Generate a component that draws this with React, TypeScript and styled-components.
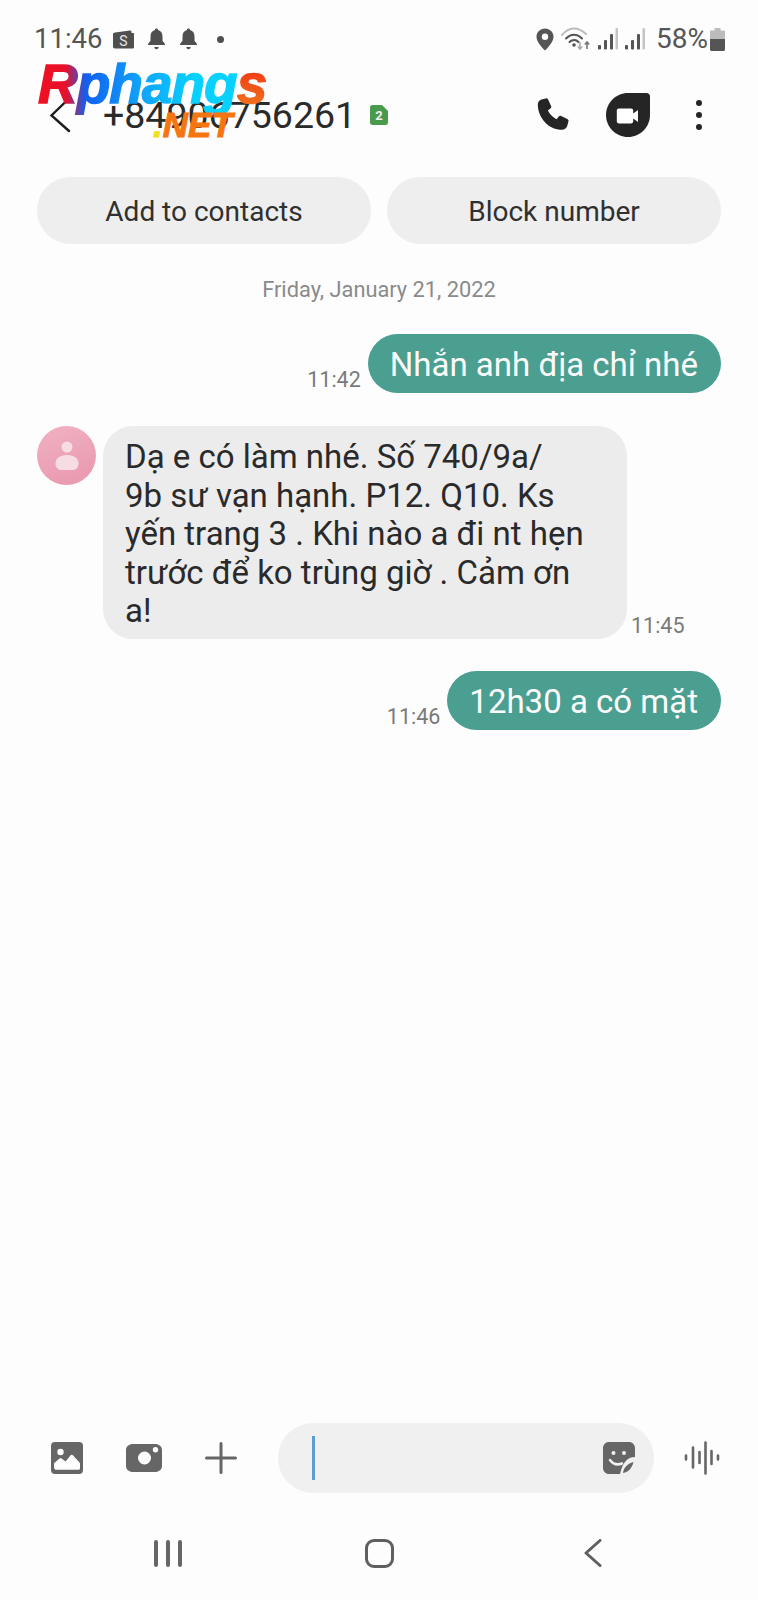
import React from 'react'
import styled, { createGlobalStyle } from 'styled-components'

const GlobalStyle = createGlobalStyle`
  html, body {
    margin: 0;
    padding: 0;
    background: #fdfdfd;
    font-family: Roboto, "Noto Sans", sans-serif;
  }
`

function Bell() {
  return (
    <svg width="19" height="22" viewBox="0 0 19 22" fill="#4f4f4f">
      <path d="M9.500 0.500c1 0 1.600.7 1.600 1.600 3 .8 4.400 3.300 4.400 6.400v4.200l2.500 3.300v1H1v-1l2.500-3.300V8.500c0-3.100 1.400-5.600 4.400-6.400 0-.9.600-1.600 1.600-1.600z" />
      <path d="M7.300 19h4.400c0 1.300-1 2.200-2.200 2.200S7.300 20.300 7.300 19z" />
    </svg>
  )
}

function Wallet() {
  return (
    <svg width="21" height="19" viewBox="0 0 21 19">
      <path d="M2 2.500 17 0.500c1 0 1.500.5 1.500 1.500v1H20c.6 0 1 .4 1 1v13c0 1-.6 1.500-1.500 1.500H2c-1.200 0-2-.8-2-2V4c0-.8.8-1.400 2-1.500z" fill="#4f4f4f" />
      <text x="10.500" y="16" textAnchor="middle" fontSize="14" fontFamily="Roboto, sans-serif" fill="#e8e8e8">S</text>
    </svg>
  )
}

function Pin() {
  return (
    <svg width="18" height="23" viewBox="0 0 18 23">
      <path fillRule="evenodd" fill="#555" d="M9 0.500c4.800 0 8.500 3.600 8.500 8.300 0 4.600-4.300 9.800-8.500 13.700C4.800 18.600.5 13.400.5 8.800.5 4.100 4.200.5 9 .5zm0 5.100a3.200 3.200 0 1 0 0 6.400 3.200 3.200 0 0 0 0-6.400z" />
    </svg>
  )
}

function Wifi() {
  return (
    <svg width="30" height="24" viewBox="0 0 30 24" fill="none">
      <path d="M1 8C8-.5 17-.5 25 7" stroke="#bdbdbd" strokeWidth="2" strokeLinecap="round" />
      <path d="M5 11.500c5-5 11-5 16 0" stroke="#555" strokeWidth="2" strokeLinecap="round" />
      <path d="M8.500 15c3-2.800 6.500-2.800 9 0" stroke="#555" strokeWidth="2" strokeLinecap="round" />
      <circle cx="13" cy="18" r="1.800" fill="#555" />
      <path d="M19 15v7M16.800 19.500 19 22l2.200-2.500" stroke="#aaa" strokeWidth="1.600" />
      <path d="M26 22v-7M23.800 17.500 26 15l2.200 2.500" stroke="#777" strokeWidth="1.600" />
    </svg>
  )
}

function Signal() {
  return (
    <svg width="20" height="22" viewBox="0 0 20 22" fill="#555">
      <rect x="0" y="17" width="3" height="4.500" rx="1" />
      <rect x="6" y="12" width="3" height="9.500" rx="1" />
      <rect x="12" y="6" width="3" height="15.500" rx="1" />
      <rect x="17.500" y="0" width="2.500" height="21.500" rx="1" fill="#c4c4c4" />
    </svg>
  )
}

function Battery() {
  return (
    <svg width="15" height="23" viewBox="0 0 15 23">
      <path d="M4.500 0h6v2.500H14c.6 0 1 .4 1 1V11H0V3.500c0-.6.4-1 1-1h3.500z" fill="#bcbcbc" />
      <path d="M0 11h15v10.500c0 .8-.6 1.500-1.500 1.500h-12C.6 23 0 22.300 0 21.500z" fill="#555" />
    </svg>
  )
}

function SimBadge() {
  return (
    <svg width="18" height="20" viewBox="0 0 18 20">
      <path d="M2.500 0H12l6 6v11.500c0 1.400-1.100 2.500-2.500 2.500h-13C1.100 20 0 18.900 0 17.500v-15C0 1.100 1.100 0 2.500 0z" fill="#4a9a4c" />
      <text x="9" y="15" textAnchor="middle" fontSize="13" fontWeight="700" fontFamily="Roboto, sans-serif" fill="#f2f2f2">2</text>
    </svg>
  )
}

function Phone() {
  return (
    <svg width="34" height="34" viewBox="0 0 34 34">
      <path fill="#252525" d="M4.500 1.500 8.800.4c1-.2 1.800.2 2.300 1.100l3 6.500c.4.900.2 1.700-.5 2.300l-2.700 2.300c1.900 3.800 4.800 6.700 8.600 8.600l2.300-2.700c.6-.7 1.500-.9 2.300-.5l6.200 3c1 .5 1.400 1.300 1.200 2.300l-1 3.600c-.5 2.700-2.800 4.800-6 4.800C12.500 32.400.8 20.300.8 6.600c0-2.800 1.500-4.500 3.700-5.100z" />
    </svg>
  )
}

function Duo() {
  return (
    <svg width="44" height="44" viewBox="0 0 44 44">
      <path fill="#252525" d="M22 0h18.500C42.500 0 44 1.500 44 3.500V22c0 12.200-9.800 22-22 22S0 34.200 0 22 9.800 0 22 0z" />
      <path fill="#fff" d="M13 15.500h12c1.300 0 2.200.9 2.200 2.200v2.900l4.800-3.500v11.800l-4.800-3.500v2.900c0 1.300-.9 2.200-2.200 2.200H13c-1.300 0-2.200-.9-2.200-2.200v-10.600c0-1.300.9-2.200 2.200-2.200z" />
    </svg>
  )
}

function Gallery() {
  return (
    <svg width="32" height="32" viewBox="0 0 32 32">
      <rect width="32" height="32" rx="4" fill="#666" />
      <circle cx="9.500" cy="10" r="3.200" fill="#fdfdfd" />
      <path fill="#fdfdfd" d="M3 24.500v-3.300l5.500-4.700c.7-.5 1.500-.5 2.100 0l4 3 5-6.300c.6-.7 1.700-.7 2.300 0l7.100 7.800v5.300c0 1.100-.9 1.500-1.700 1.500H4.700C3.800 27.800 3 26 3 24.500z" />
    </svg>
  )
}

function Camera() {
  return (
    <svg width="36" height="28" viewBox="0 0 36 28">
      <path fill="#666" fillRule="evenodd" d="M7 0h22c4 0 7 2.500 7 6v16c0 3.500-3 6-7 6H7c-4 0-7-2.500-7-6V6c0-3.500 3-6 7-6zm11.500 7.500a6.500 6.500 0 1 0 0 13 6.500 6.500 0 0 0 0-13zm11-4.500a2.700 2.700 0 1 0 0 5.400 2.700 2.700 0 0 0 0-5.400z" />
    </svg>
  )
}

function Plus() {
  return (
    <svg width="32" height="32" viewBox="0 0 32 32" fill="none" stroke="#666" strokeWidth="3" strokeLinecap="round">
      <path d="M16 1.500v29M1.500 16h29" />
    </svg>
  )
}

function Sticker() {
  return (
    <svg width="32" height="32" viewBox="0 0 32 32">
      <path fill="#666" d="M6 0h20c3.300 0 6 2.700 6 6v9c-7 0-12 4-15 17H6c-3.300 0-6-2.700-6-6V6c0-3.300 2.700-6 6-6z" />
      <circle cx="10.500" cy="11" r="2" fill="#f0f0f0" />
      <circle cx="21" cy="11" r="2" fill="#f0f0f0" />
      <path d="M7 18c3 4 7 5.500 12 3.500" fill="none" stroke="#f0f0f0" strokeWidth="2.600" strokeLinecap="round" />
      <path fill="#666" d="M20 31c.5-5 4-9 10.500-11-1.500 6-5 10-10.500 11z" />
    </svg>
  )
}

function VoiceWave() {
  return (
    <svg width="36" height="34" viewBox="0 0 36 34" fill="none" stroke="#666" strokeWidth="2.600" strokeLinecap="round">
      <path d="M2 14.500v4M9 6.500v20M15.500 11v11M21.500 1.500v31M27.500 10v13M34 14.500v4" />
    </svg>
  )
}

export default function App() {
  return (
    <Screen>
      <GlobalStyle />
      <Watermark>
        <WatermarkName>
          <NameBlue>Rphang</NameBlue>
          <NameOrange>s</NameOrange>
        </WatermarkName>
        <WatermarkNet>
          <NetDot>.</NetDot>NET
        </WatermarkNet>
      </Watermark>

      <StatusBar>
        <StatusGroup>
          <Clock>11:46</Clock>
          <NoticeIcons>
            <Wallet />
            <Bell />
            <Bell />
            <NoticeDot />
          </NoticeIcons>
        </StatusGroup>
        <StatusGroup>
          <SystemIcons>
            <Pin />
            <Wifi />
            <Signal />
            <Signal />
          </SystemIcons>
          <BatteryText>58%</BatteryText>
          <Battery />
        </StatusGroup>
      </StatusBar>

      <Header>
        <BackArrow width="24" height="36" viewBox="0 0 24 36" fill="none" stroke="#1c1c1c" strokeWidth="2.400" strokeLinecap="round">
          <path d="M20 1.500 2.500 18.500 20 34" />
        </BackArrow>
        <PhoneNumber>+84906756261</PhoneNumber>
        <SimBadge />
        <HeaderActions>
          <Phone />
          <Duo />
          <MoreDots>
            <i />
            <i />
            <i />
          </MoreDots>
        </HeaderActions>
      </Header>

      <PillRow>
        <PillButton>Add to contacts</PillButton>
        <PillButton>Block number</PillButton>
      </PillRow>

      <DateLabel>Friday, January 21, 2022</DateLabel>

      <Thread>
        <OutRow>
          <Time>11:42</Time>
          <OutBubble>Nhắn anh địa chỉ nhé</OutBubble>
        </OutRow>
        <InRow>
          <Avatar>
            <svg width="24" height="30" viewBox="0 0 24 30" fill="#f6dde4">
              <circle cx="12" cy="6" r="5.500" />
              <path d="M12 14c7 0 11.500 3.500 11.500 8.500 0 4-2.500 6.500-6 6.500h-11c-3.500 0-6-2.500-6-6.500C.5 17.500 5 14 12 14z" />
            </svg>
          </Avatar>
          <InBubble>
            Dạ e có làm nhé. Số 740/9a/
            <br />
            9b sư vạn hạnh. P12. Q10. Ks
            <br />
            yến trang 3 . Khi nào a đi nt hẹn
            <br />
            trước để ko trùng giờ . Cảm ơn
            <br />
            a!
          </InBubble>
          <Time>11:45</Time>
        </InRow>
        <OutRow>
          <Time>11:46</Time>
          <OutBubble>12h30 a có mặt</OutBubble>
        </OutRow>
      </Thread>

      <Composer>
        <ComposerTools>
          <Gallery />
          <Camera />
          <Plus />
        </ComposerTools>
        <InputPill>
          <Caret />
          <Sticker />
        </InputPill>
        <VoiceWave />
      </Composer>

      <NavBar>
        <RecentsIcon>
          <i />
          <i />
          <i />
        </RecentsIcon>
        <HomeIcon />
        <svg width="18" height="28" viewBox="0 0 18 28" fill="none" stroke="#5f5f5f" strokeWidth="3" strokeLinecap="round" strokeLinejoin="round">
          <path d="M16 1.500 2 14l14 12.500" />
        </svg>
      </NavBar>
    </Screen>
  )
}

const Screen = styled.div`
  position: relative;
  display: flex;
  flex-direction: column;
  width: 758px;
  height: 1600px;
  overflow: hidden;
  background: #fdfdfd;
  color: #2a2a2a;
`

const Watermark = styled.div`
  position: absolute;
  left: 38px;
  top: 53px;
  width: 240px;
  z-index: 2;
`

const WatermarkName = styled.div`
  font-family: 'Liberation Sans', sans-serif;
  font-size: 55px;
  font-weight: 700;
  font-style: italic;
  line-height: 62px;
  letter-spacing: -1px;
  white-space: nowrap;
  -webkit-text-stroke: 1.5px transparent;
`

const NameBlue = styled.span`
  background: linear-gradient(90deg, #f01020 0, #e8102c 14%, #1060f0 24%, #10a0f8 50%, #08d0ff 78%);
  -webkit-background-clip: text;
  background-clip: text;
  color: transparent;
`

const NameOrange = styled.span`
  background: linear-gradient(180deg, #f02010, #f08020);
  -webkit-background-clip: text;
  background-clip: text;
  color: transparent;
`

const WatermarkNet = styled.div`
  position: absolute;
  left: 115px;
  top: 52px;
  font-family: 'Liberation Sans', sans-serif;
  font-size: 35px;
  font-weight: 700;
  font-style: italic;
  line-height: 40px;
  color: #f57510;
  -webkit-text-stroke: 1px #f57510;
`

const NetDot = styled.span`
  color: #f0e020;
  -webkit-text-stroke: 1px #f0e020;
`

const StatusBar = styled.div`
  display: flex;
  justify-content: space-between;
  align-items: center;
  height: 40px;
  margin-top: 19px;
  padding: 0 33px 0 34px;
  color: #555;
`

const StatusGroup = styled.div`
  display: flex;
  align-items: center;
`

const Clock = styled.span`
  font-size: 27.500px;
  line-height: 40px;
`

const NoticeIcons = styled.div`
  display: flex;
  align-items: center;
  gap: 13px;
  margin-left: 11px;
`

const NoticeDot = styled.span`
  width: 7px;
  height: 7px;
  margin-left: 6px;
  border-radius: 50%;
  background: #4f4f4f;
`

const SystemIcons = styled.div`
  display: flex;
  align-items: center;
  gap: 7px;
`

const BatteryText = styled.span`
  margin: 0 2px 0 11px;
  font-size: 28px;
  line-height: 40px;
`

const Header = styled.div`
  display: flex;
  align-items: center;
  height: 62px;
  margin-top: 25px;
  padding: 0 37px 0 49px;
`

const BackArrow = styled.svg`
  flex: none;
`

const PhoneNumber = styled.span`
  margin: 0 14px 0 30px;
  font-size: 37.500px;
  line-height: 62px;
  white-space: nowrap;
`

const HeaderActions = styled.div`
  display: flex;
  align-items: center;
  margin-left: auto;
  gap: 35px;
`

const MoreDots = styled.div`
  display: flex;
  flex-direction: column;
  gap: 6px;
  padding: 0 0 0 11px;
  margin-right: 19px;

  i {
    display: block;
    width: 6px;
    height: 6px;
    border-radius: 50%;
    background: #252525;
  }
`

const PillRow = styled.div`
  display: grid;
  grid-template-columns: 1fr 1fr;
  gap: 16px;
  margin-top: 31px;
  padding: 0 37px;
`

const PillButton = styled.div`
  height: 67px;
  border-radius: 34px;
  background: #eeeeee;
  font-size: 28px;
  line-height: 70px;
  text-align: center;
  color: #303030;
`

const DateLabel = styled.div`
  margin-top: 31px;
  font-size: 21.800px;
  line-height: 30px;
  text-align: center;
  color: #8a8a8a;
`

const Thread = styled.div`
  flex: 1;
  display: flex;
  flex-direction: column;
  margin-top: 29px;
  padding: 0 37px;
`

const OutRow = styled.div`
  display: flex;
  justify-content: flex-end;
  align-items: flex-end;
  gap: 7px;
`

const InRow = styled.div`
  display: flex;
  align-items: flex-end;
  margin: 33px 0 32px;
`

const Time = styled.span`
  font-size: 21.500px;
  line-height: 26px;
  color: #7a7a7a;
`

const OutBubble = styled.div`
  padding: 11px 23px 9px 22px;
  border-radius: 30px;
  background: #4b9f90;
  color: #fcfcfc;
  font-size: 33px;
  line-height: 39px;
  white-space: nowrap;
`

const Avatar = styled.div`
  flex: none;
  align-self: flex-start;
  display: flex;
  align-items: center;
  justify-content: center;
  width: 59px;
  height: 59px;
  margin-right: 7px;
  border-radius: 50%;
  background: linear-gradient(160deg, #f0b2c2, #e996ae);
`

const InBubble = styled.div`
  width: 524px;
  box-sizing: border-box;
  margin-right: 4px;
  padding: 12px 22px 8px;
  border-radius: 30px;
  background: #ececec;
  font-size: 33px;
  line-height: 38.500px;
  white-space: nowrap;
`

const Composer = styled.div`
  display: flex;
  align-items: center;
  height: 70px;
  padding: 0 0 0 51px;
`

const ComposerTools = styled.div`
  display: flex;
  align-items: center;
  gap: 43px;
  margin-right: 41px;
`

const InputPill = styled.div`
  display: flex;
  align-items: center;
  justify-content: space-between;
  width: 376px;
  height: 70px;
  box-sizing: border-box;
  margin-right: 30px;
  padding: 0 19px 0 34px;
  border-radius: 35px;
  background: #f0f0f0;
`

const Caret = styled.span`
  width: 3px;
  height: 44px;
  background: #5a9fd0;
`

const NavBar = styled.div`
  display: flex;
  align-items: center;
  height: 60px;
  margin: 30px 0 17px;
  padding: 0 0 0 154px;

  > svg {
    margin-left: 190px;
  }
`

const RecentsIcon = styled.div`
  display: flex;
  gap: 8px;

  i {
    display: block;
    width: 4px;
    height: 27px;
    border-radius: 2px;
    background: #666;
  }
`

const HomeIcon = styled.div`
  width: 23px;
  height: 23px;
  margin-left: 183px;
  border: 3.500px solid #5f5f5f;
  border-radius: 9px;
`
